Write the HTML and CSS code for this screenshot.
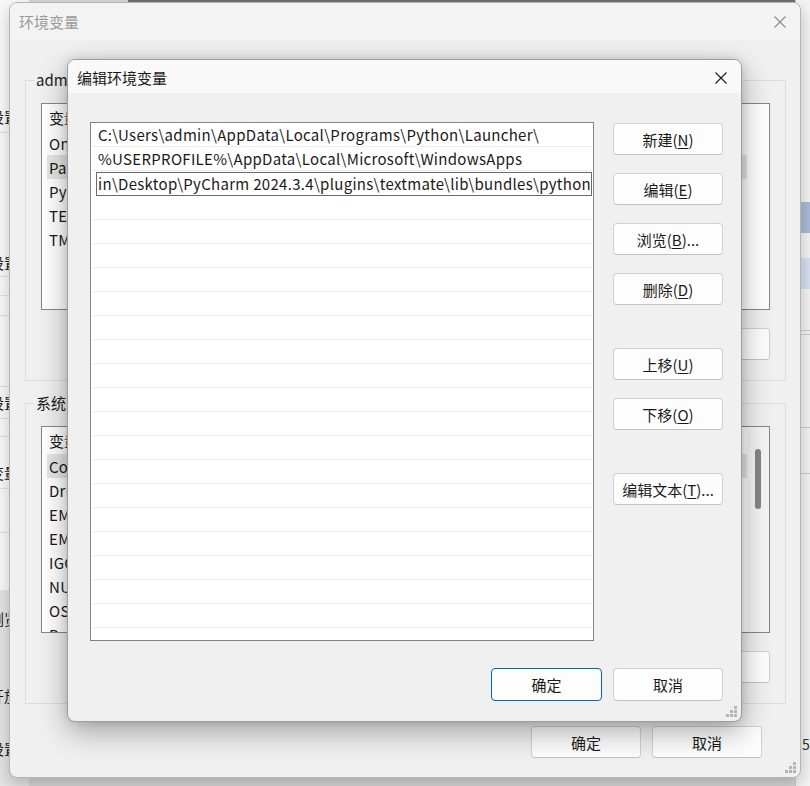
FILE: index.html
```html
<!DOCTYPE html>
<html lang="zh-CN">
<head>
<meta charset="utf-8">
<title>编辑环境变量</title>
<link rel="stylesheet" href="styles.css">
</head>
<body>
<div class="desk">
  <div class="win-left">
    <div class="wl-row h100"></div>
    <div class="wl-row h33 line"><span>设置</span></div>
    <div class="wl-row h115"></div>
    <div class="wl-row h29 line"><span>设置</span></div>
    <div class="wl-row h19 line"></div>
    <div class="wl-row h20 line"></div>
    <div class="wl-row h71 line"></div>
    <div class="wl-row h32 line"><span>设置</span></div>
    <div class="wl-row h18 line"></div>
    <div class="wl-row h19"></div>
    <div class="wl-row h33 line"><span>变量</span></div>
    <div class="wl-row h44 line"></div>
    <div class="wl-row h57"></div>
    <div class="wl-grey">
      <div class="wl-row h10"></div>
      <div class="wl-row h36"><span>浏览</span></div>
      <div class="wl-row h41"></div>
      <div class="wl-row h36"><span>开放</span></div>
      <div class="wl-row h17"></div>
      <div class="wl-row h36"><span>设置</span></div>
    </div>
  </div>
  <div class="win-top"></div>
  <div class="win-right">
    <div class="wr-gap1"></div>
    <div class="wr-sel"></div>
    <div class="wr-gap2"></div>
    <div class="wr-sel2"></div>
    <div class="wr-gap3"></div>
    <div class="wr-line"></div>
    <div class="wr-line2"></div>
    <div class="wr-gap4"></div>
    <div class="wr-line"></div>
    <div class="wr-gap5"></div>
    <div class="wr-line"></div>
    <div class="wr-gap6"></div>
    <div class="wr-text">5@</div>
  </div>

  <div class="win-back">
    <div class="wb-title">
      <span>环境变量</span>
      <svg class="x-icon" width="12" height="12" viewBox="0 0 12 12"><path d="M0.5 0.5 L11.5 11.5 M11.5 0.5 L0.5 11.5" stroke="#8a8a8a" stroke-width="1.1" fill="none"/></svg>
    </div>
    <div class="wb-body">
      <div class="group">
        <span class="group-label">admin 的用户变量(U)</span>
        <div class="lv">
          <div class="lv-head"><span class="c1">变量</span><span class="c2">值</span></div>
          <div class="lv-row"><span class="c1">OneDrive</span></div>
          <div class="lv-row sel"><span class="c1">Path</span></div>
          <div class="lv-row"><span class="c1">PyCharm</span></div>
          <div class="lv-row"><span class="c1">TEMP</span></div>
          <div class="lv-row"><span class="c1">TMP</span></div>
        </div>
        <div class="wb-btns"><button class="btn b110">删除(<u>D</u>)</button></div>
      </div>
      <div class="group">
        <span class="group-label">系统变量(S)</span>
        <div class="lv">
          <div class="lv-scroll"><div class="thumb"></div></div>
          <div class="lv-head"><span class="c1">变量</span><span class="c2">值</span></div>
          <div class="lv-row sel"><span class="c1">ComSpec</span></div>
          <div class="lv-row"><span class="c1">DriverData</span></div>
          <div class="lv-row"><span class="c1">EMSDK</span></div>
          <div class="lv-row"><span class="c1">EM_CONFIG</span></div>
          <div class="lv-row"><span class="c1">IGCCSVC_DB</span></div>
          <div class="lv-row"><span class="c1">NUMBER_OF_PROCESSORS</span></div>
          <div class="lv-row"><span class="c1">OS</span></div>
          <div class="lv-row"><span class="c1">Path</span></div>
        </div>
        <div class="wb-btns"><button class="btn b110">删除(<u>L</u>)</button></div>
      </div>
      <div class="wb-foot">
        <button class="btn b110">确定</button>
        <button class="btn b110">取消</button>
      </div>
    </div>
    <svg class="grip" width="12" height="12" viewBox="0 0 12 12"><g fill="#b4b4b4"><rect x="8" y="0" width="3" height="3"/><rect x="4" y="4" width="3" height="3"/><rect x="8" y="4" width="3" height="3"/><rect x="0" y="8" width="3" height="3"/><rect x="4" y="8" width="3" height="3"/><rect x="8" y="8" width="3" height="3"/></g></svg>
  </div>

  <div class="dlg">
    <div class="dlg-title">
      <span>编辑环境变量</span>
      <svg class="x-icon" width="12" height="12" viewBox="0 0 12 12"><path d="M0.5 0.5 L11.5 11.5 M11.5 0.5 L0.5 11.5" stroke="#1a1a1a" stroke-width="1.1" fill="none"/></svg>
    </div>
    <div class="dlg-body">
      <div class="dlg-main">
        <div class="path-list">
          <div class="pl-row">C:\Users\admin\AppData\Local\Programs\Python\Launcher\</div>
          <div class="pl-row">%USERPROFILE%\AppData\Local\Microsoft\WindowsApps</div>
          <div class="pl-row edit"><div class="edit-box">in\Desktop\PyCharm 2024.3.4\plugins\textmate\lib\bundles\python</div></div>
          <div class="pl-row"></div><div class="pl-row"></div><div class="pl-row"></div><div class="pl-row"></div>
          <div class="pl-row"></div><div class="pl-row"></div><div class="pl-row"></div><div class="pl-row"></div>
          <div class="pl-row"></div><div class="pl-row"></div><div class="pl-row"></div><div class="pl-row"></div>
          <div class="pl-row"></div><div class="pl-row"></div><div class="pl-row"></div><div class="pl-row"></div>
          <div class="pl-row"></div><div class="pl-row"></div><div class="pl-row"></div>
        </div>
        <div class="side-btns">
          <button class="btn">新建(<u>N</u>)</button>
          <button class="btn">编辑(<u>E</u>)</button>
          <button class="btn">浏览(<u>B</u>)...</button>
          <button class="btn">删除(<u>D</u>)</button>
          <button class="btn more">上移(<u>U</u>)</button>
          <button class="btn">下移(<u>O</u>)</button>
          <button class="btn more">编辑文本(<u>T</u>)...</button>
        </div>
      </div>
      <div class="dlg-foot">
        <button class="btn ok">确定</button>
        <button class="btn cancel">取消</button>
      </div>
    </div>
    <svg class="grip" width="12" height="12" viewBox="0 0 12 12"><g fill="#b4b4b4"><rect x="8" y="0" width="3" height="3"/><rect x="4" y="4" width="3" height="3"/><rect x="8" y="4" width="3" height="3"/><rect x="0" y="8" width="3" height="3"/><rect x="4" y="8" width="3" height="3"/><rect x="8" y="8" width="3" height="3"/></g></svg>
  </div>
</div>
</body>
</html>
```
FILE: styles.css
```css
* { box-sizing: border-box; }
html, body { margin: 0; padding: 0; }
body {
  width: 810px;
  height: 786px;
  overflow: hidden;
  background: #d6d6d6;
  font-family: "Noto Sans CJK SC", "Noto Sans", sans-serif;
  font-size: 15px;
  color: #1a1a1a;
}
.desk { position: relative; width: 810px; height: 786px; overflow: hidden; }

/* far-left window */
.win-left {
  position: absolute; left: -191px; top: 0; width: 220px; height: 786px;
  background: #f9f9f9;
  display: flex; flex-direction: column;
}
.wl-grey { flex: 1; background: #e4e4e4; display: flex; flex-direction: column; }
.wl-row { flex: none; display: flex; align-items: center; justify-content: flex-end; padding-right: 10px; font-size: 15px; }
.wl-row.line { border-bottom: 1px solid #e2e2e2; }
.h100 { height: 100px; } .h33 { height: 33px; } .h115 { height: 115px; }
.h29 { height: 29px; } .h19 { height: 19px; } .h20 { height: 20px; }
.h71 { height: 71px; } .h32 { height: 32px; } .h18 { height: 18px; }
.h44 { height: 44px; } .h57 { height: 57px; } .h10 { height: 10px; }
.h36 { height: 36px; } .h41 { height: 41px; } .h17 { height: 17px; }

.win-top { position: absolute; left: 128px; top: 0; width: 700px; height: 3px; background: #6f6f6f; }

.win-right {
  position: absolute; left: 795px; top: 0; width: 40px; height: 786px;
  background: #f3f3f3; border-left: 1px solid #c8c8c8;
  display: flex; flex-direction: column;
}
.wr-gap1 { height: 202px; }
.wr-sel { height: 31px; background: #a9b9d8; }
.wr-gap2 { height: 25px; }
.wr-sel2 { height: 31px; background: #d6dff0; }
.wr-gap3 { height: 41px; }
.wr-line { height: 1px; background: #c9c9c9; }
.wr-line2 { height: 1px; background: #c9c9c9; margin-top: 3px; }
.wr-gap4 { height: 92px; }
.wr-gap5 { height: 45px; }
.wr-gap6 { height: 260px; }
.wr-text { padding-left: 6px; font-size: 14px; color: #333; }

/* back window */
.win-back {
  position: absolute; left: 9px; top: 2px; width: 792px; height: 776px;
  background: #f0f0f0;
  border: 1px solid #b5b5b5;
  border-radius: 8px;
  box-shadow: 0 6px 16px rgba(0,0,0,0.22);
  overflow: hidden;
}
.wb-title {
  height: 37px; background: #f3f3f3;
  display: flex; align-items: center; justify-content: space-between;
  padding: 0 14px 0 9px;
  color: #9a9a9a;
}
.wb-body { padding: 40px 14px 0 15px; display: flex; flex-direction: column; }
.group {
  position: relative; height: 301px;
  border: 1px solid #dcdcdc;
  padding: 22px 15px 0 15px;
  margin-bottom: 22px;
  display: flex; flex-direction: column;
}
.group-label {
  position: absolute; left: 8px; top: -11px; padding: 0 2px;
  background: #f0f0f0; line-height: 20px;
}
.lv {
  position: relative;
  height: 207px; background: #fff; border: 1px solid #828790;
  overflow: hidden; padding: 0 0 0 5px;
  letter-spacing: 0.3px;
}
.lv-head { height: 27px; display: flex; align-items: center; letter-spacing: 0; }
.lv-row { height: 24px; display: flex; align-items: center; width: 700px; }
.lv-row.sel { background: #e5e5e5; }
.c1 { width: 220px; padding-left: 2px; }
.lv-scroll {
  position: absolute; right: 0; top: 0; width: 22px; height: 100%;
  background: #f4f4f4;
}
.thumb { margin: 22px 0 0 8px; width: 6px; height: 60px; background: #858585; border-radius: 3px; }
.wb-btns { display: flex; justify-content: flex-end; margin-top: 18px; padding-right: 0; }
.wb-foot { display: flex; justify-content: flex-end; gap: 11px; padding-right: 24px; margin-top: 0; }

/* buttons */
.btn {
  font: inherit; color: #1a1a1a;
  width: 110px; height: 32px;
  background: #fdfdfd;
  border: 1px solid #d0d0d0;
  border-bottom-color: #c2c2c2;
  border-radius: 4px;
  padding: 0;
  display: flex; align-items: center; justify-content: center;
}
.btn u { text-underline-offset: 2px; }

/* front dialog */
.dlg {
  position: absolute; left: 67px; top: 59px; width: 675px; height: 663px;
  background: #f0f0f0;
  border: 1px solid #9d9d9d;
  border-radius: 8px;
  box-shadow: 0 10px 30px rgba(0,0,0,0.32), 0 0 10px rgba(0,0,0,0.12);
  overflow: hidden;
}
.dlg-title {
  height: 33px; background: #f9f9f9;
  display: flex; align-items: center; justify-content: space-between;
  padding: 2px 14px 0 9px;
  color: #1a1a1a;
}
.dlg-body { padding: 29px 18px 0 22px; display: flex; flex-direction: column; }
.dlg-main { display: flex; gap: 19px; }
.path-list {
  width: 504px; height: 519px; background: #fff;
  border: 1px solid #828282; overflow: hidden;
  padding: 0 1px;
  letter-spacing: 0.3px;
}
.pl-row {
  height: 24px; border-bottom: 1px solid #ededed;
  display: flex; align-items: center;
  padding-left: 6px; white-space: nowrap; overflow: hidden;
}
.pl-row.edit { padding-left: 4px; border-bottom: none; height: 25px; }
.edit-box {
  width: 100%; height: 24px; border: 1px solid #6b6b6b;
  display: flex; align-items: center; padding-left: 1px; overflow: hidden; white-space: nowrap;
  background: #fff;
}
.side-btns { width: 110px; display: flex; flex-direction: column; gap: 18px; padding-top: 1px; }
.side-btns .more { margin-top: 25px; }
.dlg-foot { display: flex; justify-content: flex-end; gap: 11px; margin-top: 27px; }
.dlg-foot .btn { height: 33px; }
.btn.ok { width: 111px; border: 1px solid #0067c0; box-shadow: inset 0 0 0 1px #fdfdfd; }

.grip { position: absolute; right: 3px; bottom: 3px; }
.x-icon { display: block; }
```
